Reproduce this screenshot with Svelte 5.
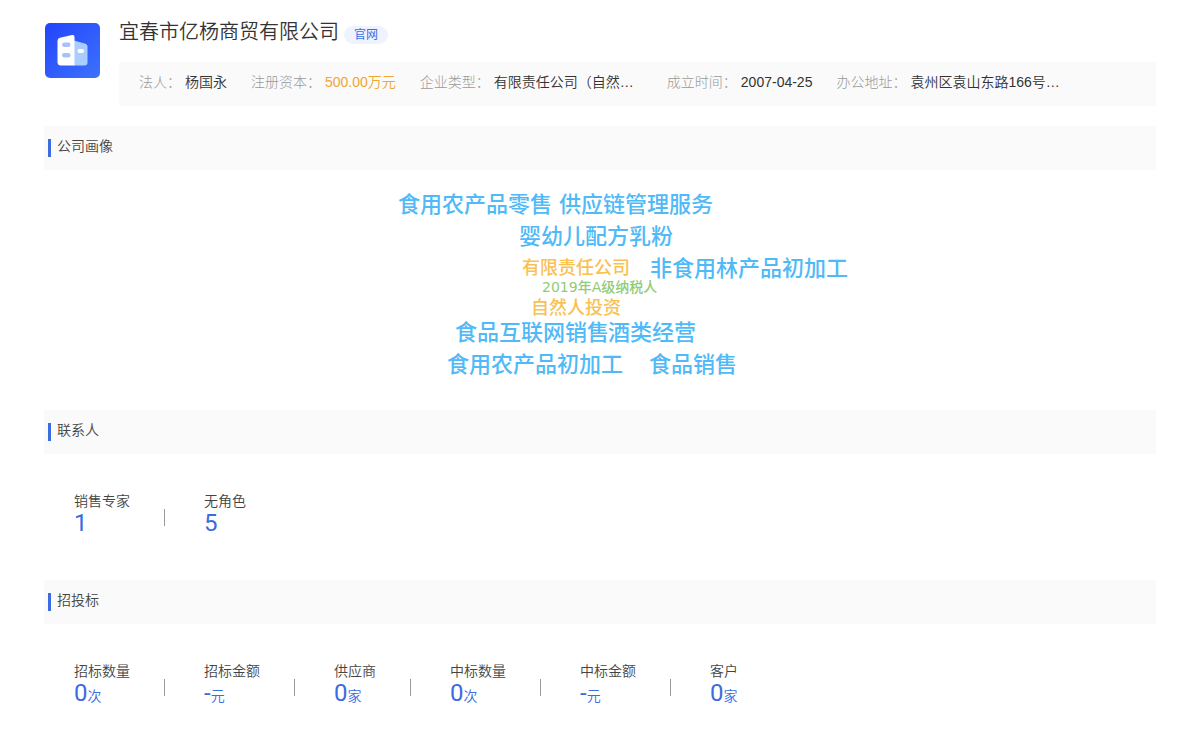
<script lang="ts">
	// 企业基本信息
	type Info = {
		label: string;
		value: string;
		highlight?: boolean;
		long?: boolean;
	};

	type Word = {
		text: string;
		size: 'large' | 'medium' | 'small';
		x: number;
		y: number;
	};

	type Stat = {
		label: string;
		value: string;
		unit?: string;
	};

	const companyName = '宜春市亿杨商贸有限公司';

	const infos: Info[] = [
		{ label: '法人', value: '杨国永' },
		{ label: '注册资本', value: '500.00万元', highlight: true },
		{ label: '企业类型', value: '有限责任公司（自然…', long: true },
		{ label: '成立时间', value: '2007-04-25' },
		{ label: '办公地址', value: '袁州区袁山东路166号…', long: true }
	];

	// 词云坐标：x 相对画布中线，y 为文字中心
	const words: Word[] = [
		{ text: '食用农产品零售', size: 'large', x: -202, y: 35 },
		{ text: '供应链管理服务', size: 'large', x: -41, y: 35 },
		{ text: '婴幼儿配方乳粉', size: 'large', x: -81, y: 67 },
		{ text: '有限责任公司', size: 'medium', x: -78, y: 98 },
		{ text: '非食用林产品初加工', size: 'large', x: 50, y: 99 },
		{ text: '2019年A级纳税人', size: 'small', x: -58, y: 117 },
		{ text: '自然人投资', size: 'medium', x: -69, y: 138 },
		{ text: '食品互联网销售', size: 'large', x: -145, y: 163 },
		{ text: '酒类经营', size: 'large', x: 8, y: 163 },
		{ text: '食用农产品初加工', size: 'large', x: -153, y: 195 },
		{ text: '食品销售', size: 'large', x: 49, y: 195 }
	];

	const contacts: Stat[] = [
		{ label: '销售专家', value: '1' },
		{ label: '无角色', value: '5' }
	];

	const bids: Stat[] = [
		{ label: '招标数量', value: '0', unit: '次' },
		{ label: '招标金额', value: '-', unit: '元' },
		{ label: '供应商', value: '0', unit: '家' },
		{ label: '中标数量', value: '0', unit: '次' },
		{ label: '中标金额', value: '-', unit: '元' },
		{ label: '客户', value: '0', unit: '家' }
	];
</script>

<svelte:head>
	<title>{companyName}</title>
</svelte:head>

{#snippet statList(stats: Stat[])}
	<dl class="stats">
		{#each stats as stat}
			<div class="stat">
				<dt>{stat.label}</dt>
				<dd>
					{stat.value}{#if stat.unit}<span class="unit">{stat.unit}</span>{/if}
				</dd>
			</div>
		{/each}
	</dl>
{/snippet}

<main class="page">
	<header class="company">
		<svg class="logo" viewBox="0 0 55 55" aria-hidden="true">
			<defs>
				<linearGradient id="logo-bg" x1="0" y1="0" x2="1" y2="1">
					<stop offset="0" stop-color="#2444fb" />
					<stop offset="1" stop-color="#3b72fd" />
				</linearGradient>
			</defs>
			<rect width="55" height="55" rx="5" fill="url(#logo-bg)" />
			<path d="M29 17.5 L40.5 20.8 Q42.5 21.4 42.5 23.5 V39.5 Q42.500 42.500 39.500 42.500 H29 Z" fill="#a9cdff" />
			<path d="M15 14.800 L27 12 Q29.500 11.400 29.500 14 V42.500 H16 Q12.500 42.500 12.500 39 V18 Q12.500 15.400 15 14.800 Z" fill="#fff" />
			<rect x="17" y="19.500" width="8.500" height="4.500" rx="2.200" fill="#a5c3fa" />
			<rect x="17" y="30" width="8.500" height="4.500" rx="2.200" fill="#a5c3fa" />
			<rect x="32.500" y="26" width="6.500" height="4" rx="2" fill="#fff" />
		</svg>

		<div class="company-main">
			<div class="title-row">
				<h1>{companyName}</h1>
				<a class="site-link" href="#site">官网</a>
			</div>
			<dl class="infos">
				{#each infos as info}
					<div class="info">
						<dt>{info.label}：</dt>
						<dd class:highlight={info.highlight} class:long={info.long}>{info.value}</dd>
					</div>
				{/each}
			</dl>
		</div>
	</header>

	<!-- 公司画像 -->
	<section>
		<h2>公司画像</h2>
		<div class="cloud">
			{#each words as word}
				<span class="word {word.size}" style="left: calc(50% + {word.x}px); top: {word.y}px">{word.text}</span>
			{/each}
		</div>
	</section>

	<!-- 联系人 -->
	<section>
		<h2>联系人</h2>
		{@render statList(contacts)}
	</section>

	<!-- 招投标 -->
	<section>
		<h2>招投标</h2>
		{@render statList(bids)}
	</section>
</main>

<style>
	:global(body) {
		background: #fff;
	}

	.page {
		padding: 20px 44px 0;
		font-family: 'Liberation Sans', 'Noto Sans CJK SC', sans-serif;
		font-size: 14px;
		line-height: 20px;
		color: #444;
	}

	h1,
	h2,
	dl,
	dd {
		margin: 0;
		font-weight: 400;
	}

	.company {
		display: flex;
		gap: 19px;
		margin-bottom: 20px;
	}

	.logo {
		flex: none;
		width: 55px;
		height: 55px;
		margin: 3px 0 0 1px;
	}

	.company-main {
		flex: 1;
		min-width: 0;
	}

	.title-row {
		display: flex;
		align-items: flex-start;
		gap: 5px;
		height: 42px;
	}

	h1 {
		font-size: 20px;
		font-weight: 350;
		line-height: 24px;
		color: #333;
	}

	.site-link {
		margin-top: 6px;
		padding: 0 10px;
		border-radius: 9px;
		background: #eef3fe;
		color: #3370ea;
		font-size: 12px;
		line-height: 18px;
		text-decoration: none;
	}

	.infos {
		display: flex;
		gap: 24px;
		padding: 10px 20px 14px;
		background: #fafafa;
	}

	.info {
		display: flex;
		gap: 4px;
	}

	.info dt {
		flex: none;
		font-weight: 300;
		color: #999;
	}

	.info dd {
		color: #333;
		font-weight: 350;
		white-space: nowrap;
	}

	.info .long {
		width: 149px;
	}

	.info .highlight {
		color: #f0a633;
	}

	h2 {
		display: flex;
		gap: 6px;
		padding: 9px 4px 13px;
		background: #fafafa;
		font-size: 14px;
		font-weight: 350;
		line-height: 22px;
		color: #444;
	}

	h2::before {
		content: '';
		width: 3px;
		height: 18px;
		margin-top: 4px;
		background: #3a6be0;
	}

	/* 词云画布 */
	.cloud {
		position: relative;
		height: 240px;
	}

	.word {
		position: absolute;
		transform: translateY(-50%);
		font-family: 'DejaVu Sans', 'Noto Sans CJK SC', sans-serif;
		font-weight: 500;
		line-height: 1;
		white-space: nowrap;
	}

	.large {
		font-size: 22px;
		color: #4fbaf7;
	}

	.medium {
		font-size: 18px;
		color: #f9c152;
	}

	.small {
		font-size: 14px;
		color: #91cc75;
	}

	.stats {
		display: flex;
		padding: 37px 30px 45px;
	}

	.stat {
		display: flex;
		flex-direction: column;
		position: relative;
		padding-right: 74px;
	}

	.stat:not(:last-child)::after {
		content: '';
		position: absolute;
		right: 39px;
		top: 18px;
		width: 1px;
		height: 17px;
		background: #999;
	}

	.stat dt {
		color: #444;
		font-weight: 350;
	}

	.stat dd {
		color: #3a6be0;
		font-family: Roboto, 'Noto Sans CJK SC', sans-serif;
		font-size: 24px;
		line-height: 24px;
	}

	.unit {
		font-size: 14px;
		font-weight: 350;
	}
</style>
